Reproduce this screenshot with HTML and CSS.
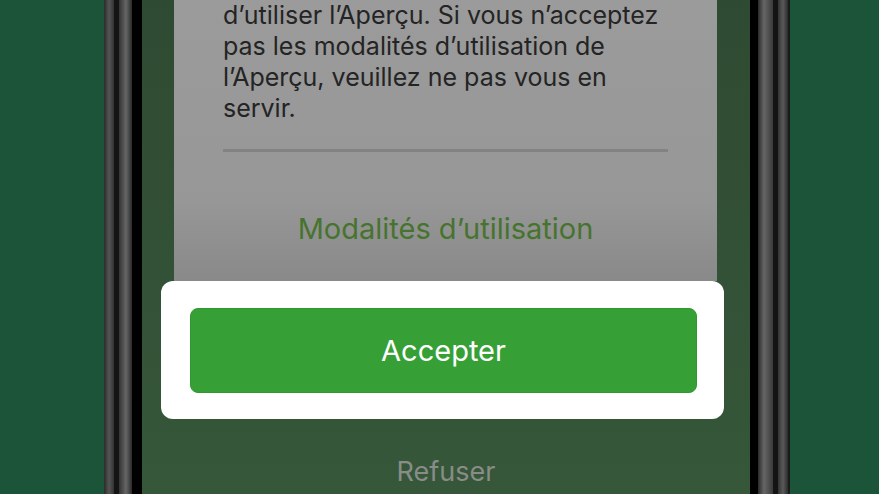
FILE: index.html
```html
<!DOCTYPE html>
<html lang="fr">
<head>
  <meta charset="UTF-8">
  <title>Aperçu - Modalités</title>
  <link rel="stylesheet" href="styles.css">
</head>
<body>

<div class="phone">
  <div class="bezel bezel-left"></div>

  <div class="screen">
    <div class="card">
      <p class="terms">d’utiliser l’Aperçu. Si vous n’acceptez pas les modalités d’utilisation de l’Aperçu, veuillez ne pas vous en servir.</p>
      <div class="divider"></div>
      <a class="terms-link" href="#">Modalités d’utilisation</a>
    </div>

    <div class="highlight">
      <button class="accept">Accepter</button>
    </div>

    <div class="refuse">Refuser</div>
  </div>

  <div class="bezel bezel-right"></div>
</div>

</body>
</html>
```

FILE: styles.css
```css
body {
  margin: 0;
  padding: 0;
  background-color: #1b5439;
  font-family: Inter, "Liberation Sans", Arial, sans-serif;
  overflow: hidden;
}

.phone {
  display: flex;
  margin-left: 104px;
  height: 494px;
}

.bezel {
  height: 100%;
}

.bezel-left {
  width: 38px;
  background: linear-gradient(to right,
    #2b2b2b 0, #555 5px, #333 10px,
    #141414 10px, #141414 15px,
    #333 15px, #666 22px, #2a2a2a 28px,
    #000 28px, #000 38px);
}

.bezel-right {
  width: 40px;
  background: linear-gradient(to right,
    #000 0, #000 8px,
    #2a2a2a 8px, #666 14px, #3a3a3a 23px,
    #141414 23px, #141414 28px,
    #333 28px, #5a5a5a 33px, #2b2b2b 38px,
    #1a1a1a 38px, #1a1a1a 40px);
}

.screen {
  width: 608px;
  background: linear-gradient(to bottom, #2f4a32, #36573a);
  display: flex;
  flex-direction: column;
}

.card {
  margin-left: 32px;
  width: 543px;
  height: 281px;
  box-sizing: border-box;
  padding: 0 49px;
  background: linear-gradient(to bottom, #9b9b9b 0, #979797 200px, #898989 281px);
  display: flex;
  flex-direction: column;
}

.terms {
  margin: 0;
  font-size: 25px;
  line-height: 31px;
  color: #242424;
}

.divider {
  margin-top: 25px;
  height: 3px;
  background-color: #838383;
}

.terms-link {
  margin-top: 59px;
  text-align: center;
  font-size: 29px;
  color: #46742f;
  text-decoration: none;
}

.highlight {
  margin-left: 19px;
  width: 563px;
  box-sizing: border-box;
  padding: 27px 27px 26px 29px;
  background-color: #fff;
  border-radius: 12px;
}

.accept {
  width: 100%;
  height: 85px;
  border: 1px solid #2f992f;
  border-radius: 8px;
  background-color: #36a036;
  color: #fff;
  font-family: inherit;
  font-size: 29px;
}

.refuse {
  margin-top: 36px;
  text-align: center;
  font-size: 27px;
  color: #888d88;
}
```
